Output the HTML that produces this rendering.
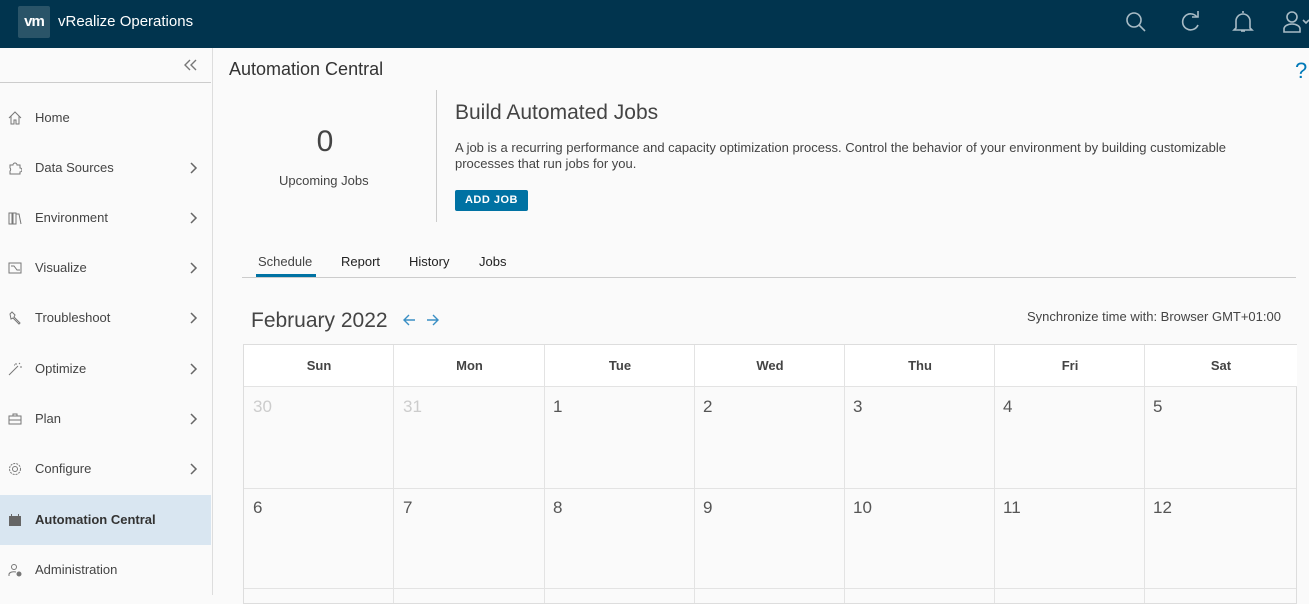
<!DOCTYPE html>
<html><head><meta charset="utf-8"><style>
*{box-sizing:border-box;margin:0;padding:0}
body{width:1309px;height:595px;overflow:hidden;background:#fafafa;font-family:"Liberation Sans",sans-serif;color:#333;position:relative}
.hdr{position:absolute;left:0;top:0;width:1309px;height:48px;background:#01344e}
.logo{position:absolute;left:18px;top:6px;width:32px;height:32px;background:#2a5468;border-radius:2px;color:#fff;font-weight:bold;font-size:15px;text-align:center;line-height:32px;letter-spacing:-1px}
.title{position:absolute;left:58px;top:13px;color:#fff;font-size:15px}
.side{position:absolute;left:0;top:48px;width:213px;height:547px;background:#fafafa;border-right:1px solid #ddd}
.side .top{height:35px;border-bottom:1px solid #ccc;width:211px;position:relative}
.item{position:absolute;left:0;width:211px;height:50px;font-size:13px;color:#444}
.item span.t{position:absolute;left:35px;top:17px}
.item svg.i{position:absolute;left:8px;top:18px}
.item svg.ch{position:absolute;left:190px;top:19px}
.item.act{background:#d9e6f1;font-weight:bold;color:#333}
.abs{position:absolute}
.cal{position:absolute;left:243px;top:344px;width:1054px;height:260px;border:1px solid #ddd;background:#fafafa}
.hc{position:absolute;top:0;height:42px;background:#fff;border-bottom:1px solid #e3e3e3;font-size:13px;font-weight:bold;text-align:center;line-height:42px;color:#444}
.vl{position:absolute;top:0;bottom:0;width:1px;background:#e3e3e3}
.d{position:absolute;font-size:17px;color:#555}
</style></head><body>
<div class="hdr">
<div class="logo">vm</div><div class="title">vRealize Operations</div>
<svg class="abs" style="left:1125px;top:11px" width="22" height="22" fill="none" stroke="#a9bcc6" stroke-width="1.6"><circle cx="9" cy="9" r="7"/><path d="M14 14l6 6"/></svg>
<svg class="abs" style="left:1180px;top:11px" width="22" height="22" fill="none" stroke="#a9bcc6" stroke-width="1.6"><path d="M17 6A8 8 0 1 0 18 14"/><path d="M12 6h6V0"/></svg>
<svg class="abs" style="left:1232px;top:9px" width="22" height="26" fill="none" stroke="#a9bcc6" stroke-width="1.6"><path d="M11 2v2M4 19V12a7 7 0 0 1 14 0v7l2 2H2z"/><path d="M9 22h4"/></svg>
<svg class="abs" style="left:1282px;top:10px" width="27" height="24" fill="none" stroke="#a9bcc6" stroke-width="1.6"><circle cx="10" cy="7" r="5"/><path d="M2 22v-3a8 5 0 0 1 16 0v3z"/><path d="M21 10l3 3 3-3"/></svg>
</div>
<div class="side">
<div class="top"><svg class="abs" style="left:184px;top:11px" width="14" height="12" fill="none" stroke="#777" stroke-width="1.4"><path d="M6 1L1 6l5 5M12 1L7 6l5 5"/></svg></div>
<div class="item" style="top:45px"><svg class="i" width="14" height="14" fill="none" stroke="#777" stroke-width="1"><path d="M1 7L7 1l6 6M3 5v8h3V9h2v4h3V5"/></svg><span class="t">Home</span></div>
<div class="item" style="top:95px"><svg class="i" width="14" height="14" fill="none" stroke="#777" stroke-width="1"><path d="M2 4h3a2 2 0 0 1 4 0h3v3a2 2 0 0 1 0 4v2H2v-3a2 2 0 0 0 0-3z"/></svg><span class="t">Data Sources</span><svg class="ch" width="8" height="12" fill="none" stroke="#666" stroke-width="1.5"><path d="M1 1l5 5-5 5"/></svg></div>
<div class="item" style="top:145px"><svg class="i" width="14" height="14" fill="none" stroke="#777" stroke-width="1"><path d="M1 2h3v11H1zM5 2h3v11H5zM8 3l3 0 2 10"/></svg><span class="t">Environment</span><svg class="ch" width="8" height="12" fill="none" stroke="#666" stroke-width="1.5"><path d="M1 1l5 5-5 5"/></svg></div>
<div class="item" style="top:195px"><svg class="i" width="14" height="14" fill="none" stroke="#777" stroke-width="1"><rect x="1" y="2" width="12" height="10"/><path d="M3 5h3l3 4h3"/></svg><span class="t">Visualize</span><svg class="ch" width="8" height="12" fill="none" stroke="#666" stroke-width="1.5"><path d="M1 1l5 5-5 5"/></svg></div>
<div class="item" style="top:245px"><svg class="i" width="14" height="14" fill="none" stroke="#777" stroke-width="1"><path d="M2 3l2-2 3 3-1 2 6 6-1 1-6-6-2 1z"/></svg><span class="t">Troubleshoot</span><svg class="ch" width="8" height="12" fill="none" stroke="#666" stroke-width="1.5"><path d="M1 1l5 5-5 5"/></svg></div>
<div class="item" style="top:296px"><svg class="i" width="14" height="14" fill="none" stroke="#777" stroke-width="1"><path d="M1 13L10 4M8 1v2M12 5h2M11 1l1 1M6 3h1"/></svg><span class="t">Optimize</span><svg class="ch" width="8" height="12" fill="none" stroke="#666" stroke-width="1.5"><path d="M1 1l5 5-5 5"/></svg></div>
<div class="item" style="top:346px"><svg class="i" width="14" height="14" fill="none" stroke="#777" stroke-width="1"><rect x="1" y="4" width="12" height="8"/><path d="M5 4V2h4v2M1 8h12"/></svg><span class="t">Plan</span><svg class="ch" width="8" height="12" fill="none" stroke="#666" stroke-width="1.5"><path d="M1 1l5 5-5 5"/></svg></div>
<div class="item" style="top:396px"><svg class="i" width="14" height="14" fill="none" stroke="#777" stroke-width="1"><circle cx="7" cy="7" r="2.5"/><circle cx="7" cy="7" r="5.5" stroke-dasharray="2 1"/></svg><span class="t">Configure</span><svg class="ch" width="8" height="12" fill="none" stroke="#666" stroke-width="1.5"><path d="M1 1l5 5-5 5"/></svg></div>
<div class="item act" style="top:447px"><svg class="i" width="14" height="14" fill="#666"><rect x="1" y="3" width="12" height="10"/><path d="M3 1h1v3H3zM10 1h1v3h-1z"/></svg><span class="t">Automation Central</span></div>
<div class="item" style="top:497px"><svg class="i" width="14" height="14" fill="none" stroke="#777" stroke-width="1"><circle cx="6" cy="4" r="2.5"/><path d="M1 13v-2a5 3 0 0 1 7-2"/><circle cx="11" cy="11" r="2" fill="#777"/></svg><span class="t">Administration</span></div>
</div>
<div class="abs" style="left:229px;top:59px;font-size:18px;color:#333">Automation Central</div>
<div class="abs" style="left:1295px;top:58px;font-size:22px;color:#0079b8">?</div>
<div class="abs" style="left:280px;top:125px;width:90px;text-align:center;font-size:30px;color:#444">0</div>
<div class="abs" style="left:279px;top:173px;font-size:13px;color:#444">Upcoming Jobs</div>
<div class="abs" style="left:436px;top:90px;width:1px;height:132px;background:#ccc"></div>
<div class="abs" style="left:455px;top:101px;font-size:21px;color:#444">Build Automated Jobs</div>
<div class="abs" style="left:455px;top:140px;width:830px;font-size:13px;line-height:16px;color:#444">A job is a recurring performance and capacity optimization process. Control the behavior of your environment by building customizable processes that run jobs for you.</div>
<div class="abs" style="left:455px;top:190px;width:73px;height:21px;background:#0072a3;border-radius:2px;color:#fff;font-size:11px;font-weight:bold;text-align:center;line-height:21px;letter-spacing:.5px">ADD JOB</div>
<div class="abs" style="left:242px;top:277px;width:1054px;height:1px;background:#ccc"></div>
<div class="abs" style="left:258px;top:254px;font-size:13px;color:#444">Schedule</div>
<div class="abs" style="left:256px;top:274px;width:60px;height:3px;background:#0072a3"></div>
<div class="abs" style="left:341px;top:254px;font-size:13px;color:#222">Report</div>
<div class="abs" style="left:409px;top:254px;font-size:13px;color:#222">History</div>
<div class="abs" style="left:479px;top:254px;font-size:13px;color:#222">Jobs</div>
<div class="abs" style="left:251px;top:309px;font-size:21px;color:#444">February 2022</div>
<svg class="abs" style="left:403px;top:313px" width="36" height="14" fill="none" stroke="#3a8fc4" stroke-width="1.4"><path d="M12 7H1M6 2L1 7l5 5M24 7h11M30 2l5 5-5 5"/></svg>
<div class="abs" style="left:1027px;top:309px;font-size:13px;color:#444">Synchronize time with: Browser GMT+01:00</div>
<div class="cal">
<div class="hc" style="left:0;width:150px">Sun</div><div class="hc" style="left:150px;width:151px">Mon</div><div class="hc" style="left:301px;width:150px">Tue</div><div class="hc" style="left:451px;width:150px">Wed</div><div class="hc" style="left:601px;width:150px">Thu</div><div class="hc" style="left:751px;width:150px">Fri</div><div class="hc" style="left:901px;width:152px">Sat</div>
<div class="vl" style="left:149px"></div><div class="vl" style="left:300px"></div><div class="vl" style="left:450px"></div><div class="vl" style="left:600px"></div><div class="vl" style="left:750px"></div><div class="vl" style="left:900px"></div>
<div class="abs" style="left:0;right:0;top:143px;height:1px;background:#e3e3e3"></div>
<div class="abs" style="left:0;right:0;top:243px;height:1px;background:#e3e3e3"></div>
<div class="d" style="left:9px;top:52px;color:#ccc">30</div><div class="d" style="left:159px;top:52px;color:#ccc">31</div><div class="d" style="left:309px;top:52px">1</div><div class="d" style="left:459px;top:52px">2</div><div class="d" style="left:609px;top:52px">3</div><div class="d" style="left:759px;top:52px">4</div><div class="d" style="left:909px;top:52px">5</div>
<div class="d" style="left:9px;top:153px">6</div><div class="d" style="left:159px;top:153px">7</div><div class="d" style="left:309px;top:153px">8</div><div class="d" style="left:459px;top:153px">9</div><div class="d" style="left:609px;top:153px">10</div><div class="d" style="left:759px;top:153px">11</div><div class="d" style="left:909px;top:153px">12</div>
</div>
</body></html>
